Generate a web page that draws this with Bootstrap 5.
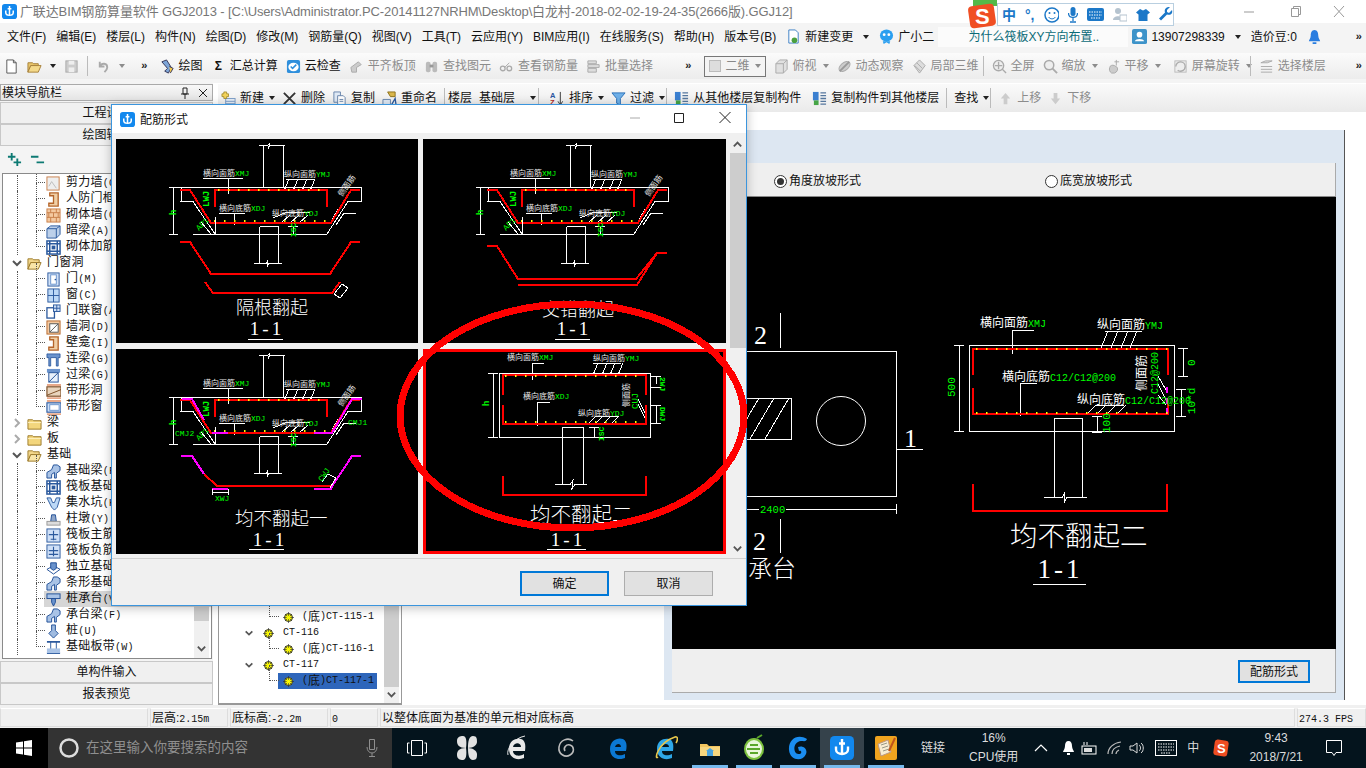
<!DOCTYPE html>
<html lang="zh-CN">
<head>
<meta charset="UTF-8">
<title>广联达BIM钢筋算量软件 GGJ2013</title>
<link rel="stylesheet" href="https://cdn.jsdelivr.net/npm/bootstrap@5.3.3/dist/css/bootstrap.min.css">
<style>
html, body { margin: 0; background: #fff; }
body { width: 1366px; height: 768px; overflow: hidden; position: relative; font: 12px/16px "Liberation Sans", "Noto Sans CJK SC", sans-serif; color: #111; }
.ic { width: 15px; height: 15px; flex: none; }
.ic-sm { width: 11px; height: 11px; flex: none; }
.title-bar { height: 23px; color: #777; font-size: 13px; padding-left: 2px; }
.title-txt { margin-left: 3px; letter-spacing: -.13px; white-space: nowrap; }
.win-ctl { position: absolute; top: 0; height: 23px; width: 46px; text-align: center; }
.menu-bar { height: 27px; background: #f4f4f4; padding-left: 7px; gap: 10px; white-space: nowrap; }
.hint-box { width: 190px; height: 20px; background: #fbfbfb; color: #0b6b78; padding-left: 30px; line-height: 20px; margin-left: -6px; margin-right: -6px; }
.chev { color: #222; font: bold 11px/10px "Liberation Mono", monospace; }
.band { height: 33px; background: #f4f4f4; padding-top: 3px; }
.seg { height: 26px; background: linear-gradient(#fbfbfb, #ececec); gap: 8px; white-space: nowrap; }
.tbi { display: inline-flex; align-items: center; gap: 4px; }
.off { color: #8c8c8c; }
.tri { width: 0; height: 0; border: 3px solid transparent; border-top: 4px solid #222; border-bottom: 0; flex: none; }
.tri.lt { border-top-color: #8c8c8c; }
.seg .tri, .band-2 .tri { margin-left: -2px; }
.vsep { width: 1px; height: 20px; background: #bbb; flex: none; }
.vs-l4 { margin-left: -4px; }
.vs-r4 { margin-right: -4px; }
.seg .tri-r6, .band-2 .tri-r6 { margin-right: -6px; }
.band-2 .tri-r5 { margin-right: -5px; }
.dim-box { width: 62px; height: 21px; border: 1px solid #777; background: #f4f4f4; padding: 0 4px; gap: 5px; color: #888; }
.sq { width: 12px; height: 12px; background: #ddd; border: 1px solid #bbb; }
.body-row { height: 622px; }
.left-pane { width: 213px; background: #f4f4f4; }
.pane-head { height: 17px; margin: 1px 0 1px; border: 1px solid #aaa; background: linear-gradient(#f8f8f8, #e4e4e4); padding-left: 1px; }
.tab-btn { height: 22px; border: 1px solid #c8c8c8; background: #f0f0f0; text-align: center; line-height: 21px; font-size: 12px; flex: none; }
.tree-tools { height: 27px; background: #f4f4f4; padding-left: 7px; gap: 8px; flex: none; }
.tree-box { height: 486px; margin: 0 1px 2px 2px; border: 1px solid #8a8a8a; background: #fff; overflow: hidden; position: relative; padding-top: 1px; flex: none; }
.node { height: 16px; position: relative; white-space: nowrap; display: flex; align-items: center; }
.node.kid { padding-left: 43px; }
.node.dir { padding-left: 8px; }
.node .ic { margin-right: 4px; }
.node .arw { width: 12px; height: 12px; margin-right: 4px; flex: none; }
.node::before { content: ""; position: absolute; left: 14px; top: 0; bottom: 0; border-left: 1px dotted #555; }
.node.dir::before { display: none; }
.node.kid::after { content: ""; position: absolute; left: 33px; top: -8px; height: 16px; width: 9px; border-left: 1px dotted #555; border-bottom: 1px dotted #555; }
.node.sel { background: linear-gradient(#d6d6d6, #d6d6d6) 41px 0 no-repeat; }
.lab { padding: 0 1px; letter-spacing: .02em; }
.lat { font: 10px/16px "Liberation Mono", monospace; }
.vbar { position: absolute; right: 2px; top: 0; bottom: 0; width: 15px; background: #f0f0f0; }
.vbar-thumb { position: absolute; left: 0; right: 0; background: #cdcdcd; }
.vbar-arw { position: absolute; left: 2px; width: 11px; height: 11px; }
.mid-pane { width: 184px; margin-left: 5px; border: 1px solid #999; border-width: 0 1px 2px 1px; position: relative; padding-bottom: 14px; background: #fff; }
.ct-row { height: 16px; position: relative; white-space: nowrap; display: flex; align-items: center; }
.ct-head { padding-left: 25px; }
.ct-leaf { padding-left: 64px; }
.ct-head .arw { width: 10px; height: 10px; flex: none; }
.ct-head .ic-sm { margin: 0 9px 0 9px; }
.ct-leaf .ic-sm { margin-right: 8px; }
.ct-leaf::before { content: ""; position: absolute; left: 50px; top: -8px; height: 16px; width: 10px; border-left: 1px dotted #555; border-bottom: 1px dotted #555; }
.ct-hit { background: #2e66bb; padding: 0 5px; margin-left: -5px; width: 99px; height: 16px; display: flex; align-items: center; }
.main-pane { background: #fff; position: relative; }
.band-2 { height: 28px; background: linear-gradient(#fafafa, #eaeaea); gap: 7px; padding-left: 3px; white-space: nowrap; margin-left: 5px; margin-top: 1px; flex: none; }
.stat-bar { height: 23px; background: #f0f0f0; padding-top: 3px; }
.stat-cell { height: 19px; border: 1px solid #ddd; border-top-color: #fff; margin-right: 2px; padding-left: 1px; line-height: 18px; white-space: nowrap; overflow: hidden; flex: none; }
.sc-a { width: 148px; } .sc-b { width: 78px; } .sc-c { width: 98px; } .sc-d { width: 48px; } .sc-e { width: 915px; } .sc-f { width: 69px; margin-right: 0; }
.task-bar { height: 40px; background: #04141d; color: #ddd; }
.start-btn { width: 48px; background: #000; flex: none; }
.search-box { width: 344px; background: #333; color: #8f8f8f; padding: 0 10px; gap: 6px; font-size: 13.5px; flex: none; }
.tk { width: 44px; height: 40px; position: relative; flex: none; }
.tk-w { width: 50px; }
.tk-e { width: 52px; }
.tk-on { background: #35424b; }
.tk.run::after { content: ""; position: absolute; left: 4px; right: 4px; bottom: 0; height: 3px; background: #76b9ed; }
.tray-lbl { font-size: 12px; color: #ddd; text-align: center; white-space: nowrap; line-height: 19px; }
.lnk-lbl { margin-left: 13px; }
.tray-row { gap: 6px; }
.wnd-bg { position: absolute; left: 664px; top: 130px; width: 681px; height: 570px; background: #dde7f2; border-right: 1px solid #555; }
.radio-strip { position: absolute; left: 8px; top: 33px; width: 664px; height: 34px; background: #efefef; border-bottom: 1px solid #888; border-right: 1px solid #aaa; }
.rad { position: absolute; top: 10px; display: flex; align-items: center; gap: 2px; }
.rad-a { left: 102px; }
.rad-b { left: 373px; }
.rad-o { width: 13px; height: 13px; border: 1px solid #333; border-radius: 50%; background: #fff; position: relative; }
.rad-o.on::after { content: ""; position: absolute; inset: 2px; border-radius: 50%; background: #333; }
.cad-wrap { position: absolute; left: 8px; top: 67px; width: 664px; height: 452px; background: #000; }
.cad-wrap svg, .dg-cell svg { display: block; }
.bot-strip { position: absolute; left: 8px; top: 519px; width: 664px; height: 44px; background: #efefef; border-bottom: 1px solid #aaa; border-right: 1px solid #aaa; }
.win-btn { border-radius: 0; font: 12px/18px "Liberation Sans", "Noto Sans CJK SC", sans-serif; padding: 0; background: #e1e1e1; color: #111; }
.btn-form { position: absolute; left: 566px; top: 11px; width: 72px; height: 23px; border: 2px solid #0078d7; }
.dlg { position: absolute; left: 111px; top: 104px; width: 636px; height: 502px; background: #f0f0f0; border: 1px solid #3b95dd; box-shadow: 0 2px 10px rgba(0,0,0,.25); }
.dlg-head { height: 28px; background: #fff; padding: 1px 0 0 8px; gap: 5px; font-size: 12px; position: relative; }
.dlg-ctl { position: absolute; top: 3px; }
.dlg-grid { position: absolute; left: 4px; top: 34px; width: 611px; display: grid; grid-template-columns: 302px 303px; grid-template-rows: 204px 205px; gap: 6px 5px; }
.dg-cell { background: #000; overflow: hidden; }
.dg-cell.pick { outline: 3px solid #f00; outline-offset: -3px; }
.dlg-scroll { position: absolute; left: 618px; top: 30px; width: 16px; height: 422px; background: #f0f0f0; }
.dlg-foot { position: absolute; left: 0; right: 0; bottom: 0; height: 47px; border-top: 1px solid #d0d0d0; }
.btn-ok { position: absolute; left: 408px; top: 12px; width: 89px; height: 25px; border: 2px solid #0078d7; }
.btn-no { position: absolute; left: 512px; top: 12px; width: 89px; height: 25px; border: 1px solid #adadad; }
.ring-mark { position: absolute; left: 0; top: 0; width: 1366px; height: 768px; pointer-events: none; }
.ime-bar { position: absolute; left: 997px; top: 3px; width: 177px; height: 23px; background: #fff; border: 1px solid #b9cfe0; gap: 9px; padding-left: 4px; color: #1c78c8; font-weight: 700; font-size: 14px; }
.ime-logo { position: absolute; left: 966px; top: 0; width: 32px; height: 30px; }
.cad-t { font-family: "Liberation Sans", "Noto Sans CJK SC", sans-serif; fill: #fff; font-weight: 300; }
.cad-n { font-family: "Liberation Serif", serif; fill: #fff; }
.num-1 { font-size: 19px; letter-spacing: 3px; text-anchor: middle; }
.num-2 { font-size: 27px; letter-spacing: 3px; text-anchor: middle; }
.lb { font-size: 8px; fill: #e8e8e8; font-family: "Noto Sans CJK SC", sans-serif; }
.lb-big { font-size: 12px; fill: #fff; font-family: "Noto Sans CJK SC", sans-serif; }
.gr { fill: #0f0; font-family: "Liberation Mono", monospace; }
.wl { stroke: #fff; stroke-width: 1; fill: none; shape-rendering: crispEdges; }
.rd { stroke: #f00; stroke-width: 2; fill: none; shape-rendering: crispEdges; }
.mg { stroke: #f0f; stroke-width: 2; fill: none; shape-rendering: crispEdges; }
.yd { stroke: #ff0; stroke-width: 2; fill: none; stroke-dasharray: 1.5 8.5; }
</style>
</head>
<body>

<svg width="0" height="0" class="position-absolute">
  <defs>
    <symbol id="i-chv" viewBox="0 0 12 12"><path d="M2 4l4 4 4-4" fill="none" stroke="#555" stroke-width="2"/></symbol>
    <symbol id="i-chu" viewBox="0 0 12 12"><path d="M2 8l4-4 4 4" fill="none" stroke="#555" stroke-width="2"/></symbol>
    <symbol id="i-chr" viewBox="0 0 12 12"><path d="M4 2l4 4-4 4" fill="none" stroke="#aaa" stroke-width="2"/></symbol>
    <symbol id="i-gld" viewBox="0 0 16 16"><rect width="16" height="16" rx="3" fill="#1288ee"/><path d="M8 2v10M4 7v2c0 2 2 3 4 3s4-1 4-3V7M6 5h4" stroke="#fff" stroke-width="1.6" fill="none"/></symbol>
    <symbol id="i-doc" viewBox="0 0 16 16"><path d="M3 1h7l3 3v11H3z" fill="#fff" stroke="#555"/><path d="M10 1v3h3" fill="none" stroke="#555"/></symbol>
    <symbol id="i-open" viewBox="0 0 16 16"><path d="M1 4h5l1 1h5v2H4L1 14z" fill="#e8c56a" stroke="#a6803a"/><path d="M4 7h11l-3 7H1z" fill="#f4d98a" stroke="#a6803a"/></symbol>
    <symbol id="i-save" viewBox="0 0 16 16"><rect x="2" y="2" width="12" height="12" fill="#ccc" stroke="#aaa"/><rect x="5" y="2" width="6" height="4" fill="#eee"/><rect x="5" y="9" width="6" height="5" fill="#eee"/></symbol>
    <symbol id="i-undo" viewBox="0 0 16 16"><path d="M4 3v5h5M4 8c2-4 8-4 8 1 0 2-1 3-3 5" fill="none" stroke="#aaa" stroke-width="2"/></symbol>
    <symbol id="i-draw" viewBox="0 0 16 16"><path d="M2 3l5-2 5 8-3 6-4-2 3-3z" fill="#7ea6d8" stroke="#335"/><path d="M10 8l4 2-3 5" fill="#f2c94c" stroke="#335"/></symbol>
    <symbol id="i-check" viewBox="0 0 16 16"><rect x="1" y="1" width="14" height="14" rx="2" fill="#2f8fdc"/><ellipse cx="8" cy="8.5" rx="5.5" ry="4.5" fill="#fff"/><path d="M5 8l2 2 4-4" stroke="#2f8fdc" stroke-width="1.6" fill="none"/></symbol>
    <symbol id="i-g1" viewBox="0 0 16 16"><path d="M2 9l8-6 3 3-5 3v5H3z" fill="#ccc" stroke="#aaa"/></symbol>
    <symbol id="i-g2" viewBox="0 0 16 16"><rect x="2" y="3" width="5" height="11" rx="2" fill="#bbb"/><rect x="9" y="3" width="5" height="11" rx="2" fill="#bbb"/><rect x="6" y="6" width="4" height="3" fill="#999"/></symbol>
    <symbol id="i-g3" viewBox="0 0 16 16"><circle cx="4" cy="10" r="2.5" fill="none" stroke="#aaa" stroke-width="1.4"/><circle cx="11" cy="10" r="2.5" fill="none" stroke="#aaa" stroke-width="1.4"/><path d="M6 9l5-5" stroke="#aaa"/></symbol>
    <symbol id="i-g4" viewBox="0 0 16 16"><path d="M2 2h9v3H2zM2 6h12v3H2zM2 10h9v4H2z" fill="#ddd" stroke="#aaa"/></symbol>
    <symbol id="i-cube" viewBox="0 0 16 16"><path d="M2 5l4-4h8v10l-4 4H2z" fill="#e0e0e0" stroke="#aaa"/><path d="M2 5h8v10M10 5l4-4" fill="none" stroke="#aaa"/></symbol>
    <symbol id="i-orb" viewBox="0 0 16 16"><ellipse cx="8" cy="8" rx="7" ry="4" transform="rotate(-40 8 8)" fill="#ccc" stroke="#aaa"/><path d="M3 13L13 3" stroke="#999" stroke-width="2"/></symbol>
    <symbol id="i-cu3" viewBox="0 0 16 16"><path d="M8 1l6 6-6 8-6-8z" fill="#ddd" stroke="#aaa"/><path d="M5 4l6 6M3 7l6 6" stroke="#aaa"/></symbol>
    <symbol id="i-full" viewBox="0 0 16 16"><circle cx="7" cy="7" r="5.5" fill="#eee" stroke="#aaa" stroke-width="1.4"/><path d="M7 3v8M3 7h8M11 11l4 4" stroke="#aaa" stroke-width="1.4"/></symbol>
    <symbol id="i-zoom" viewBox="0 0 16 16"><circle cx="6.5" cy="6.5" r="5" fill="#eee" stroke="#aaa" stroke-width="1.6"/><path d="M10 10l5 5" stroke="#aaa" stroke-width="2"/></symbol>
    <symbol id="i-pan" viewBox="0 0 16 16"><path d="M4 9c0-2 3-3 5-2l3 2c1 2 0 5-3 6H6C4 14 3 11 4 9zM11 1v6M9 3h5" fill="#ccc" stroke="#aaa"/></symbol>
    <symbol id="i-rot" viewBox="0 0 16 16"><rect x="2" y="2" width="12" height="12" fill="#eee" stroke="#bbb"/><path d="M3 8a5 5 0 0 1 10 0 5 5 0 0 1-8 4" fill="none" stroke="#aaa" stroke-width="1.4"/></symbol>
    <symbol id="i-layers" viewBox="0 0 16 16"><path d="M2 4l5-2h7L9 4zM2 8h12M2 11h12M2 14h12" fill="#ddd" stroke="#aaa"/></symbol>
    <symbol id="i-new" viewBox="0 0 16 16"><rect x="5" y="8" width="10" height="8" fill="#e6eef8" stroke="#7a9cc6"/><path d="M5 11h10M5 13.500h10" stroke="#7a9cc6"/><path d="M3 1h3v2h2v3H6v2H3V6H1V3h2z" fill="#f3d35a" stroke="#9a8120" stroke-width=".8"/></symbol>
    <symbol id="i-del" viewBox="0 0 16 16"><path d="M2 2l12 12M14 2L2 14" stroke="#333" stroke-width="2"/></symbol>
    <symbol id="i-copy" viewBox="0 0 16 16"><path d="M2 1h7v11H2z" fill="#dfe9f5" stroke="#6684ab"/><path d="M6 5h6l2 2v8H6z" fill="#fff" stroke="#6684ab"/><path d="M8 9h4M8 11h4" stroke="#6684ab"/></symbol>
    <symbol id="i-ren" viewBox="0 0 16 16"><path d="M6 1h8v5H9z" fill="#d9b64b" stroke="#8c6f1a"/><path d="M1 9h8v6H1z" fill="#dfe9f5" stroke="#6684ab"/><path d="M10 15l4-7 1 7" fill="none" stroke="#2c5a9e" stroke-width="1.4"/></symbol>
    <symbol id="i-sort" viewBox="0 0 16 16"><text x="0" y="7" font-size="8" font-weight="700" fill="#2b55a0" font-family="Liberation Sans">A</text><text x="0" y="15" font-size="8" font-weight="700" fill="#b02a2a" font-family="Liberation Sans">Z</text><path d="M11 1v13M8.500 11l2.500 4 2.500-4" stroke="#333" fill="none"/></symbol>
    <symbol id="i-flt" viewBox="0 0 16 16"><path d="M1 2h14l-5 6v7l-4-2V8z" fill="#6fb0e8" stroke="#2a6fb8"/></symbol>
    <symbol id="i-cp1" viewBox="0 0 16 16"><rect x="1" y="1" width="6" height="9" fill="#3a7fd0"/><rect x="2" y="10" width="5" height="5" fill="#46a546"/><path d="M9 2h6M9 5h6M9 8h6M9 11h6M9 14h6" stroke="#56779e" stroke-width="1.4"/></symbol>
    <symbol id="i-up" viewBox="0 0 16 16"><path d="M8 2l5 6h-3v6H6V8H3z" fill="#ccc"/></symbol>
    <symbol id="i-down" viewBox="0 0 16 16"><path d="M8 14l5-6h-3V2H6v6H3z" fill="#ccc"/></symbol>
    <symbol id="i-chg" viewBox="0 0 16 16"><path d="M3 1h7l3 3v11H3z" fill="#fff" stroke="#3b7fc4"/><circle cx="9" cy="12" r="3" fill="#4aa03f"/></symbol>
    <symbol id="i-gxe" viewBox="0 0 16 16"><ellipse cx="8" cy="7" rx="7" ry="6.500" fill="#2a9ff0"/><circle cx="5.500" cy="6" r="1.500" fill="#fff"/><circle cx="10.500" cy="6" r="1.500" fill="#fff"/><path d="M4 13l1 3 3-2 3 2 1-3z" fill="#2a9ff0"/></symbol>
    <symbol id="i-user" viewBox="0 0 16 16"><rect width="16" height="16" rx="2" fill="#3d93c9"/><circle cx="8" cy="6" r="3" fill="#fff"/><path d="M3 13c1-3 9-3 10 0z" fill="#fff"/></symbol>
    <symbol id="i-bell" viewBox="0 0 16 16"><path d="M8 1c3 0 4 3 4 6 0 3 2 5 2 6H2c0-1 2-3 2-6 0-3 1-6 4-6zM6 14h4v2H6z" fill="#2a7de0"/></symbol>
    <symbol id="i-plus2" viewBox="0 0 16 16"><path d="M5 1v8M1 5h8M11 7v8M7 11h8" stroke="#0d7a73" stroke-width="2"/></symbol>
    <symbol id="i-minus2" viewBox="0 0 16 16"><path d="M1 5h8M7 11h8" stroke="#0d7a73" stroke-width="2"/></symbol>
    <symbol id="t-wall" viewBox="0 0 16 16"><rect x="1" y="1" width="13" height="14" fill="#eee" stroke="#c87f4a"/><path d="M3 11l3-5 5 7" stroke="#bbb" fill="none"/></symbol>
    <symbol id="t-frame" viewBox="0 0 16 16"><path d="M4 1h9v14H3v-3h5V4H4z" fill="#f0cfa6" stroke="#b5652a" stroke-width="1.4"/></symbol>
    <symbol id="t-brick" viewBox="0 0 16 16"><rect x="1" y="1" width="14" height="14" fill="#f4c9a0" stroke="#c87f4a"/><path d="M1 5h14M1 10h14M5 1v4M11 1v4M8 5v5M3 5v5M13 5v5M5 10v5M11 10v5" stroke="#c87f4a"/></symbol>
    <symbol id="t-beam" viewBox="0 0 16 16"><path d="M1 5l4-3h10v9l-4 4H1z" fill="#bcd0ea" stroke="#2c5a9e"/><path d="M1 5h10v10M11 5l4-3" fill="none" stroke="#2c5a9e"/></symbol>
    <symbol id="t-door" viewBox="0 0 16 16"><rect x="2" y="1" width="12" height="14" fill="#cfe0f7" stroke="#2c5a9e"/><rect x="5" y="3" width="6" height="10" fill="#fff" stroke="#6a93cd"/><circle cx="10" cy="8" r=".9" fill="#2c5a9e"/></symbol>
    <symbol id="t-win" viewBox="0 0 16 16"><rect x="2" y="1" width="12" height="14" fill="#bcd8f6" stroke="#2c5a9e"/><path d="M8 1v14M2 8h12" stroke="#2c5a9e"/></symbol>
    <symbol id="t-dw" viewBox="0 0 16 16"><rect x="1" y="4" width="8" height="11" fill="#fff" stroke="#2c5a9e" stroke-width="1.4"/><rect x="8" y="1" width="7" height="7" fill="#cfe0f7" stroke="#2c5a9e"/><path d="M11.500 1v7M8 4.500h7" stroke="#2c5a9e"/></symbol>
    <symbol id="t-hole" viewBox="0 0 16 16"><rect x="1" y="1" width="14" height="14" fill="#f4c9a0" stroke="#b5652a"/><rect x="4" y="4" width="9" height="9" fill="#fff" stroke="#555"/><path d="M4 13l9-9" stroke="#555"/></symbol>
    <symbol id="t-lian" viewBox="0 0 16 16"><path d="M1 2h14v4h-2v9h-2V6H5v9H3V6H1z" fill="#6a93cd" stroke="#1f4e96" stroke-width=".8"/></symbol>
    <symbol id="t-guo" viewBox="0 0 16 16"><path d="M1 1h14v4H1z" fill="#6a93cd"/><rect x="3" y="5" width="10" height="10" fill="#e7f0fb" stroke="#1f4e96"/><path d="M3 15L13 5" stroke="#1f4e96"/></symbol>
    <symbol id="t-band" viewBox="0 0 16 16"><rect x="1" y="3" width="15" height="10" fill="#e8d4bd" stroke="#7a4a20" stroke-width="1.2"/><path d="M1 12l15-6" stroke="#7a4a20"/><path d="M1 1h15M1 15h15" stroke="#e8a98a" stroke-width="2"/></symbol>
    <symbol id="t-bwin" viewBox="0 0 16 16"><rect x="1" y="3" width="15" height="10" fill="#cfe0f7" stroke="#2c5a9e" stroke-width="1.2"/><rect x="4" y="5" width="10" height="6" fill="#fff" stroke="#6a93cd"/><path d="M1 1h15M1 15h15" stroke="#e8a98a" stroke-width="2"/></symbol>
    <symbol id="t-rf" viewBox="0 0 16 16"><rect x="1" y="1" width="14" height="14" fill="#fff" stroke="#2c5a9e" stroke-width="1.6"/><path d="M4 1v14M12 1v14M1 4h14M1 12h14" stroke="#2c5a9e" stroke-width="1.6"/><rect x="6" y="6" width="4" height="4" fill="#2c5a9e"/></symbol>
    <symbol id="t-pit" viewBox="0 0 16 16"><path d="M1 2h4l2 5h2l2-5h4l-3 10-3 3-3-3z" fill="#bcd8f6" stroke="#2c5a9e"/></symbol>
    <symbol id="t-pier" viewBox="0 0 16 16"><path d="M6 3h4l1 7H5z" fill="#8fa6c9" stroke="#1f4e96"/><rect x="1" y="10" width="14" height="4" fill="#ddd" stroke="#999"/></symbol>
    <symbol id="t-main" viewBox="0 0 16 16"><rect x="1" y="1" width="14" height="14" fill="#cfe0f7" stroke="#2c5a9e"/><path d="M8 3v10M3 7h10M5 12h6" stroke="#2c5a9e" stroke-width="1.2"/></symbol>
    <symbol id="t-neg" viewBox="0 0 16 16"><rect x="1" y="1" width="14" height="14" fill="#cfe0f7" stroke="#2c5a9e"/><path d="M8 3v10M3 7h10M3 11h10" stroke="#2c5a9e" stroke-width="1.2"/></symbol>
    <symbol id="t-iso" viewBox="0 0 16 16"><path d="M1 10l7-4 7 4-7 5z" fill="#fff" stroke="#1f4e96"/><path d="M5 3h6v6l-3 2-3-2z" fill="#6a93cd" stroke="#1f4e96"/></symbol>
    <symbol id="t-str" viewBox="0 0 16 16"><path d="M1 15V9l5-3 2-5h4l3 2v4l-4 3v5H9v-6L6 11v4z" fill="#a9c3e6" stroke="#1f4e96"/></symbol>
    <symbol id="t-cap" viewBox="0 0 16 16"><rect x="1" y="2" width="14" height="5" fill="#a9c3e6" stroke="#1f4e96"/><path d="M6 7h4v4l-2 4-2-4z" fill="#6a93cd" stroke="#1f4e96"/></symbol>
    <symbol id="t-pile" viewBox="0 0 16 16"><path d="M6 1h4v6l3 3-3 3-2 2-2-2-3-3 3-3z" fill="#9fbbe0" stroke="#1f4e96"/></symbol>
    <symbol id="t-strip" viewBox="0 0 16 16"><path d="M1 2h14M1 14h14" stroke="#2c5a9e" stroke-width="2"/><path d="M5 2v12M11 2v12" stroke="#2c5a9e"/><rect x="1" y="9" width="14" height="5" fill="#a9c3e6"/></symbol>
    <symbol id="t-shut" viewBox="0 0 16 16"><path d="M1 4h5l1 1h8v9H1z" fill="#f3d67d" stroke="#9c7a2a"/><path d="M1 7h14" stroke="#fff2c0"/></symbol>
    <symbol id="t-open" viewBox="0 0 16 16"><path d="M1 3h5l1 1h6v3H4L1 14z" fill="#f2d68a" stroke="#9c7a2a"/><path d="M4 7h11l-3 7H1z" fill="#f9e5a8" stroke="#9c7a2a"/></symbol>
    <symbol id="t-ct" viewBox="0 0 11 11"><circle cx="5.500" cy="5.500" r="4" fill="#ff0" stroke="#333"/><path d="M5.500 0v11M0 5.500h11M2 2l7 7M9 2l-7 7" stroke="#333" stroke-width=".7"/><circle cx="5.500" cy="5.500" r="1.800" fill="#ff0"/></symbol>

    <symbol id="dg-base" viewBox="0 0 302 204" width="302" height="204">
      <path class="wl" d="M142.500 6.500h9l2-2-1 5 1-3h15M147.500 6.500v41.500M167.500 6.500v41.500M62 48.500h184M57.500 48v47M53 48.500h9M53 95.500h9M77 95.500h134M64 62.500h13L99 95M246 62.500h-14L211 95M143.500 87.500h19M143.500 87.500v37M162.500 87.500v37M138 124.500h12l2-3-1 6 2-3h13M65 48.500v14M245.500 48v14M177 87.500v8M172 87.500h10M172 95.500h10"/>
      <path class="wl" d="M87 39.500h40M112.500 39.500v15M170 40.500h29M173 40l-5 12M182 40l-5 12M191 40l-5 12M199 40l-5 12M103 74.500h26M118.500 74v12M157 79l14-6h23M165 84l9-8M174 84l9-8M183 84l9-8M228 74.500h12M228 74l-8 12M222 70l-7 13"/>
      <path class="rd" d="M64 51h10l21 33h120l20-33h9"/>
      <path class="rd" stroke-width="3" d="M99 68V51h112v17"/>
      <path class="yd" d="M102 51h108M98 82h116"/>
      <text class="lb" x="87" y="37">横向面筋<tspan class="gr">XMJ</tspan></text>
      <text class="lb" x="168" y="38">纵向面筋<tspan class="gr">YMJ</tspan></text>
      <text class="lb" x="103" y="72">横向底筋<tspan class="gr">XDJ</tspan></text>
      <text class="lb" x="156" y="77">纵向底筋<tspan class="gr">YDJ</tspan></text>
      <text class="lb" transform="rotate(-55 226 58)" x="226" y="58">侧面筋</text>
      <text class="gr" font-size="9" font-weight="700" transform="rotate(-90 93 68)" x="93" y="68">LWJ</text>
      <text class="gr" font-size="9" font-weight="700" transform="rotate(-90 60 76)" x="60" y="76">h</text>
      <text class="gr" font-size="8" font-weight="700" transform="rotate(-90 180 98)" x="180" y="98">ISC</text>
      <text class="gr" font-size="8" transform="rotate(-45 83 92)" x="83" y="92">AP1</text>
      <path class="wl" d="M85 83l10 12M99 78v17"/>
    </symbol>
  </defs>
</svg>

<!-- title -->
<div class="title-bar d-flex align-items-center position-relative">
  <svg class="ic"><use href="#i-gld"/></svg>
  <span class="title-txt">广联达BIM钢筋算量软件 GGJ2013 - [C:\Users\Administrator.PC-20141127NRHM\Desktop\白龙村-2018-02-02-19-24-35(2666版).GGJ12]</span>
  <span class="win-ctl" style="left:1226px"><svg width="12" height="23"><path d="M1 12h10" stroke="#999"/></svg></span>
  <span class="win-ctl" style="left:1273px"><svg width="12" height="23"><path d="M1.500 8.500h7v8h-7zM3.500 8V6.500h7v8H9" fill="none" stroke="#999"/></svg></span>
  <span class="win-ctl" style="left:1316px"><svg width="12" height="23"><path d="M1 6l10 11M11 6L1 17" stroke="#999"/></svg></span>
</div>

<!-- menu -->
<div class="menu-bar d-flex align-items-center">
  <span>文件(F)</span><span>编辑(E)</span><span>楼层(L)</span><span>构件(N)</span><span>绘图(D)</span><span>修改(M)</span><span>钢筋量(Q)</span><span>视图(V)</span><span>工具(T)</span><span>云应用(Y)</span><span>BIM应用(I)</span><span>在线服务(S)</span><span>帮助(H)</span><span>版本号(B)</span>
  <span class="tbi"><svg class="ic"><use href="#i-chg"/></svg>新建变更</span><span class="tri"></span>
  <span class="tbi"><svg class="ic"><use href="#i-gxe"/></svg>广小二</span>
  <span class="hint-box">为什么筏板XY方向布置..</span>
  <span class="tbi"><svg class="ic"><use href="#i-user"/></svg>13907298339</span><span class="tri"></span>
  <span>造价豆:0</span><svg class="ic"><use href="#i-bell"/></svg>
  <span class="chev ms-auto pe-1">»</span>
</div>

<!-- toolbar 1 -->
<div class="band">
  <div class="seg d-flex align-items-center ps-1">
    <svg class="ic"><use href="#i-doc"/></svg>
    <span class="tbi"><svg class="ic"><use href="#i-open"/></svg><span class="tri ms-1"></span></span>
    <svg class="ic"><use href="#i-save"/></svg>
    <span class="vsep"></span>
    <span class="tbi"><svg class="ic"><use href="#i-undo"/></svg><span class="tri lt ms-1"></span></span>
    <span class="chev ms-2">»</span>
    <span class="tbi ms-1"><svg class="ic"><use href="#i-draw"/></svg>绘图</span>
    <span class="tbi"><b class="px-1">Σ</b>汇总计算</span>
    <span class="tbi"><svg class="ic"><use href="#i-check"/></svg>云检查</span>
    <span class="tbi off"><svg class="ic"><use href="#i-g1"/></svg>平齐板顶</span>
    <span class="tbi off"><svg class="ic"><use href="#i-g2"/></svg>查找图元</span>
    <span class="tbi off"><svg class="ic"><use href="#i-g3"/></svg>查看钢筋量</span>
    <span class="tbi off"><svg class="ic"><use href="#i-g4"/></svg>批量选择</span>
    <span class="chev ms-4">»</span>
    <span class="dim-box d-flex align-items-center ms-1"><span class="sq"></span>二维<span class="tri lt ms-auto"></span></span>
    <span class="tbi off"><svg class="ic"><use href="#i-cube"/></svg>俯视</span><span class="tri lt"></span>
    <span class="tbi off"><svg class="ic"><use href="#i-orb"/></svg>动态观察</span>
    <span class="tbi off"><svg class="ic"><use href="#i-cu3"/></svg>局部三维</span>
    <span class="vsep vs-l4"></span>
    <span class="tbi off"><svg class="ic"><use href="#i-full"/></svg>全屏</span>
    <span class="tbi off"><svg class="ic"><use href="#i-zoom"/></svg>缩放</span><span class="tri lt"></span>
    <span class="tbi off"><svg class="ic"><use href="#i-pan"/></svg>平移</span><span class="tri lt"></span>
    <span class="tbi off ms-1"><svg class="ic"><use href="#i-rot"/></svg>屏幕旋转</span><span class="tri lt tri-r6"></span>
    <span class="vsep vs-l4"></span>
    <span class="tbi off"><svg class="ic"><use href="#i-layers"/></svg>选择楼层</span>
    <span class="chev ms-auto pe-1">»</span>
  </div>
</div>

<!-- work area -->
<div class="body-row d-flex">
  <div class="left-pane d-flex flex-column">
    <div class="pane-head d-flex align-items-center flex-none">模块导航栏
      <svg class="ms-auto" width="10" height="12"><path d="M3 1h4v6H3zM1 7h8M5 7v5" fill="none" stroke="#222"/></svg>
      <svg class="mx-1 ms-2" width="10" height="10"><path d="M1 1l8 8M9 1L1 9" stroke="#222"/></svg>
    </div>
    <div class="tab-btn">工程设置</div>
    <div class="tab-btn">绘图输入</div>
    <div class="tree-tools d-flex align-items-center"><svg class="ic"><use href="#i-plus2"/></svg><svg class="ic"><use href="#i-minus2"/></svg></div>
    <div class="tree-box">
      <div id="treeRows"></div>
      <div class="vbar"><div class="vbar-thumb" style="top:0;height:447px"></div><svg class="vbar-arw" style="bottom:4px"><use href="#i-chv"/></svg></div>
    </div>
    <div class="tab-btn">单构件输入</div>
    <div class="tab-btn">报表预览</div>
  </div>

  <div class="flex-grow-1 d-flex flex-column">
    <div class="band-2 d-flex align-items-center">
      <span class="tbi"><svg class="ic"><use href="#i-new"/></svg>新建</span><span class="tri"></span>
      <span class="tbi"><svg class="ic"><use href="#i-del"/></svg>删除</span>
      <span class="tbi"><svg class="ic"><use href="#i-copy"/></svg>复制</span>
      <span class="tbi"><svg class="ic"><use href="#i-ren"/></svg>重命名</span>
      <span class="vsep vs-r4"></span><span>楼层</span><span class="tbi">基础层</span><span class="tri ms-2 tri-r5"></span><span class="vsep"></span>
      <span class="tbi ms-1"><svg class="ic"><use href="#i-sort"/></svg>排序</span><span class="tri"></span>
      <span class="tbi"><svg class="ic"><use href="#i-flt"/></svg>过滤</span><span class="tri tri-r6"></span>
      <span class="vsep"></span>
      <span class="tbi"><svg class="ic"><use href="#i-cp1"/></svg>从其他楼层复制构件</span>
      <span class="tbi ms-1"><svg class="ic"><use href="#i-cp1"/></svg>复制构件到其他楼层</span>
      <span class="vsep"></span><span>查找</span><span class="tri tri-r6"></span><span class="vsep"></span>
      <span class="tbi off"><svg class="ic"><use href="#i-up"/></svg>上移</span>
      <span class="tbi off"><svg class="ic"><use href="#i-down"/></svg>下移</span>
    </div>
    <div class="flex-grow-1 d-flex">
      <div class="mid-pane d-flex flex-column justify-content-end">
        <div class="vbar"><div class="vbar-thumb" style="top:0;height:575px"></div><svg class="vbar-arw" style="bottom:3px"><use href="#i-chv"/></svg></div>
        <div class="ct-row ct-leaf"><svg class="ic-sm"><use href="#t-ct"/></svg><span class="lat">(</span>底<span class="lat">)CT-115-1</span></div>
        <div class="ct-row ct-head"><svg class="arw"><use href="#i-chv"/></svg><svg class="ic-sm"><use href="#t-ct"/></svg><span class="lat">CT-116</span></div>
        <div class="ct-row ct-leaf"><svg class="ic-sm"><use href="#t-ct"/></svg><span class="lat">(</span>底<span class="lat">)CT-116-1</span></div>
        <div class="ct-row ct-head"><svg class="arw"><use href="#i-chv"/></svg><svg class="ic-sm"><use href="#t-ct"/></svg><span class="lat">CT-117</span></div>
        <div class="ct-row ct-leaf"><span class="ct-hit"><svg class="ic-sm"><use href="#t-ct"/></svg><span class="lat">(</span>底<span class="lat">)CT-117-1</span></span></div>
      </div>
      <div class="main-pane flex-grow-1"></div>
    </div>
  </div>
</div>

<!-- status -->
<div class="stat-bar d-flex">
  <div class="stat-cell sc-a"></div>
  <div class="stat-cell sc-b">层高:<span class="lat">2.15m</span></div>
  <div class="stat-cell sc-c">底标高:<span class="lat">-2.2m</span></div>
  <div class="stat-cell sc-d"><span class="lat">0</span></div>
  <div class="stat-cell sc-e">以整体底面为基准的单元相对底标高</div>
  <div class="stat-cell sc-f"><span class="lat">274.3 FPS</span></div>
</div>

<!-- taskbar -->
<div class="task-bar d-flex">
  <div class="start-btn d-flex align-items-center justify-content-center">
    <svg width="16" height="16"><path d="M0 2.500l7-1v6H0zM8 1.300L16 0v7.500H8zM0 8.500h7v6l-7-1zM8 8.500h8V16l-8-1.300z" fill="#fff"/></svg>
  </div>
  <div class="search-box d-flex align-items-center">
    <svg width="22" height="22"><circle cx="11" cy="11" r="8.500" fill="none" stroke="#ddd" stroke-width="2.500"/></svg>
    <span>在这里输入你要搜索的内容</span>
    <svg class="ms-auto me-1" width="12" height="20"><path d="M3.500 1.500h5v10h-5zM1 9c0 8 10 8 10 0M6 15v3M3 18.500h6" fill="none" stroke="#8f8f8f"/></svg>
  </div>
  <div class="tk tk-w d-flex align-items-center justify-content-center"><svg width="20" height="18"><path d="M4.500 1.500h11v15h-11zM2.500 4H.5v10h2M17.500 4h2v10h-2" fill="none" stroke="#fff"/></svg></div>
  <div class="tk tk-w d-flex align-items-center justify-content-center"><svg width="22" height="26"><path d="M10 13C3 13 1 10 1 6s3-5 6-5 4 4 3 12zM12 13c0-7 1-12 5-12s4 3 4 6-4 6-9 6zM10 13c-7 0-9 3-9 7s3 5 6 5 4-5 3-12zM12 13c0 7 1 12 5 12s4-3 4-6-4-6-9-6z" fill="#e2e2e2"/></svg></div>
  <div class="tk tk-w d-flex align-items-center justify-content-center"><svg width="22" height="26"><path d="M19 16H7c0 5 7 6 11 3v4c-7 3-15 0-15-9S10 3 15 4c4 1 5 6 4 12zM7 12h8c0-5-7-5-8 0z" fill="#e8e8e8"/><path d="M2 20C0 14 8 3 19 1" fill="none" stroke="#e8e8e8"/></svg></div>
  <div class="tk tk-w d-flex align-items-center justify-content-center"><svg width="20" height="22"><path d="M16 4C11 0 3 3 2 10s6 11 11 8 4-9 0-10-7 3-5 6" fill="none" stroke="#bbb" stroke-width="1.600"/></svg></div>
  <div class="tk tk-e d-flex align-items-center justify-content-center"><svg width="20" height="22"><path d="M18 14H7c0 5 6 5 10 3v4C10 24 2 21 2 12S10 0 15 2c4 2 4 7 3 12zM7 10h6c0-4-5-4-6 0z" fill="#0b78d4"/></svg></div>
  <div class="tk d-flex align-items-center justify-content-center"><svg width="24" height="26"><path d="M19 16H8c0 5 6 5 10 3v4C11 26 3 23 3 14S10 3 15 4c4 1 5 6 4 12zM8 12h7c0-4-6-4-7 0z" fill="#2ea7e8"/><path d="M4 22C0 26 3 8 21 2c3-1 3 3 1 6" fill="none" stroke="#e9c84c" stroke-width="1.600"/></svg></div>
  <div class="tk run d-flex align-items-center justify-content-center"><svg width="22" height="20"><path d="M1 18V6h7l2 2h11v10z" fill="#f3c65f"/><path d="M1 18V9h20v9z" fill="#f8d77f"/><path d="M8 13h6v5H8z" fill="#4aa3df"/><path d="M7 13h8L11 10z" fill="#4aa3df"/></svg></div>
  <div class="tk run d-flex align-items-center justify-content-center"><svg width="24" height="28"><ellipse cx="12" cy="15" rx="10" ry="11" fill="#7cc13e"/><ellipse cx="12" cy="15" rx="8" ry="9" fill="#e9f7da"/><path d="M5 15h13M8 11h8M8 19h8" stroke="#5aa72a" stroke-width="2"/><path d="M15 4l5-3" stroke="#5aa72a" stroke-width="2"/></svg></div>
  <div class="tk run d-flex align-items-center justify-content-center"><svg width="24" height="28"><path d="M21 5c-9-6-19 0-18 11s14 12 17 4c2-5-3-9-8-7l1 4c3-1 3 3 0 3-6 1-7-12 2-13 3 0 5 1 6-2z" fill="#1a8df0"/></svg></div>
  <div class="tk tk-on run d-flex align-items-center justify-content-center"><svg width="24" height="24"><use href="#i-gld"/></svg></div>
  <div class="tk run d-flex align-items-center justify-content-center"><svg width="24" height="26"><rect x="1" y="1" width="22" height="24" rx="2" fill="#f0a41f"/><path d="M4 9l10-4 3 12-10 4z" fill="#f8edd2" stroke="#b98"/><path d="M7 10l6-2M8 13l6-2M9 16l6-2" stroke="#998"/><path d="M15 16l6-13" stroke="#c0541a" stroke-width="2"/></svg></div>
  <div class="tray-lbl align-self-center lnk-lbl">链接</div>
  <div class="tray-lbl align-self-center ms-4">16%<br>CPU使用</div>
  <div class="d-flex align-items-center tray-row ms-3">
    <svg width="14" height="8"><path d="M1 7l6-6 6 6" fill="none" stroke="#fff" stroke-width="1.200"/></svg>
    <svg class="ms-2" width="13" height="16"><path d="M6.500 1C9 1 10 3 10 6c0 3 2 5 2 6H1c0-1 2-3 2-6 0-3 1-5 3.500-5zM5 13h3v2H5z" fill="#fff"/></svg>
    <svg width="16" height="14"><rect x="1" y="5" width="14" height="8" fill="none" stroke="#fff"/><rect x="3" y="7" width="8" height="4" fill="#ddd"/><path d="M3 4V1M6 4V1" stroke="#fff"/></svg>
    <svg class="ms-1" width="16" height="14"><path d="M1 13c0-6 5-11 13-12M5 13c0-4 3-7 8-8M9 13c0-2 1-3 3-4" fill="none" stroke="#bbb" stroke-width="1.200"/></svg>
    <svg width="16" height="14"><path d="M1 5h3l4-3v10L4 9H1zM10 4c2 1 2 5 0 6M12 2c3 2 3 8 0 10" fill="none" stroke="#ddd"/></svg>
    <svg class="ms-1" width="22" height="16"><rect x=".5" y=".5" width="21" height="15" fill="none" stroke="#fff"/><path d="M3 4h16M3 7h16M3 10h16M6 13h10" stroke="#fff" stroke-dasharray="1.500 1"/></svg>
    <span class="tray-lbl ms-1">中</span>
    <svg class="ms-2" width="16" height="18"><rect x="1" y="1" width="14" height="16" rx="3" transform="rotate(8 8 9)" fill="#ef4d22"/><text x="4" y="14" font-size="13" font-weight="700" fill="#fff" font-family="Liberation Sans">S</text></svg>
  </div>
  <div class="tray-lbl align-self-center ms-3 ps-1">9:43<br>2018/7/21</div>
  <div class="d-flex align-items-center ms-auto pe-4"><svg width="16" height="17"><path d="M.5.500h15v12H10l-2 3-2-3H.5z" fill="none" stroke="#fff"/></svg></div>
</div>

<!-- underlying settings window -->
<div class="wnd-bg">
  <div class="radio-strip">
    <span class="rad rad-a"><span class="rad-o on"></span>角度放坡形式</span>
    <span class="rad rad-b"><span class="rad-o"></span>底宽放坡形式</span>
  </div>
  <div class="cad-wrap">
    <svg width="664" height="452" viewBox="672 197 664 452">
      <path class="wl" d="M690 351.500h206.500V496.500H690M780.500 313v35M896 449.500h27M747 509.500h150M896.500 504v10M780.500 519v34"/>
      <path class="wl" d="M700 398.500h91.500v41H700M705 439l24-41M720 439l24-41M735 439l24-41M750 439l24-41M765 439l24-41"/>
      <circle cx="841" cy="421" r="24.500" fill="none" stroke="#fff"/>
      <text class="cad-n" font-size="26" x="754" y="344">2</text>
      <text class="cad-n" font-size="26" x="904" y="447">1</text>
      <text class="cad-n" font-size="26" x="753" y="550">2</text>
      <text class="cad-t" font-size="24" x="748" y="577">承台</text>
      <rect x="759" y="501" width="27" height="16" fill="#000"/>
      <text class="gr" font-size="10.500" x="760" y="513">2400</text>

      <path class="wl" d="M969.500 345.500h205v86h-205zM954 345.500h10M954 431.500h10M959.500 345v86M1012.500 354v-24h21M1105 331h37M1108 331l-7 17M1118 331l-7 17M1128 331l-7 17M1137 331l-7 17M1020.500 416v-33h16M1095 405h29M1087 414l9-9M1097 414l9-9M1107 414l9-9M1117 414l9-9M1054.500 418h28M1054.500 418v79M1082.500 418v79M1044 497.500h18l3-5-1 10 3-5h20M1178 348.500h10M1183.500 348v28M1178 376.500h10M1176 389.500h10M1181.500 389v27M1176 416.500h10M1092 416.500h10M1097.500 416v16M1092 432.500h10M1158 376l8 14M1158 384l8 16M1158 395l8 10"/>
      <path class="rd" d="M973 375v-26h195v26M973 388v26h195v-10"/>
      <path class="mg" d="M1167 387v6M1167 398v6M1167 408v6"/>
      <path class="yd" d="M976 349h192M976 413h192"/>
      <path class="rd" d="M973 484v27h194v-27"/>
      <text class="lb-big" x="980" y="327">横向面筋<tspan class="gr" font-size="10">XMJ</tspan></text>
      <text class="lb-big" x="1097" y="329">纵向面筋<tspan class="gr" font-size="10">YMJ</tspan></text>
      <text class="lb-big" x="1002" y="381">横向底筋<tspan class="gr" font-size="10">C12/C12@200</tspan></text>
      <text class="lb-big" x="1077" y="404">纵向底筋<tspan class="gr" font-size="10">C12/C12@200</tspan></text>
      <text class="lb-big" transform="rotate(-90 1146 391)" x="1146" y="391">侧面筋</text>
      <text class="gr" font-size="10" transform="rotate(-90 1158 394)" x="1158" y="394">C12@200</text>
      <text class="gr" font-size="11" transform="rotate(-90 955 397)" x="955" y="397">500</text>
      <text class="gr" font-size="11" transform="rotate(-90 1195 366)" x="1195" y="366">0</text>
      <text class="gr" font-size="11" transform="rotate(-90 1195 414)" x="1195" y="414">10*d</text>
      <text class="gr" font-size="11" transform="rotate(-90 1110 433)" x="1110" y="433">100</text>
      <text class="cad-t" font-size="27.500" x="1010" y="546">均不翻起二</text>
      <text class="cad-n num-2" x="1060" y="578">1-1</text>
      <path class="wl" d="M1033 584.500h53"/>
    </svg>
  </div>
  <div class="bot-strip"><button type="button" class="btn win-btn btn-form">配筋形式</button></div>
</div>

<!-- dialog -->
<div class="dlg">
  <div class="dlg-head d-flex align-items-center">
    <svg class="ic"><use href="#i-gld"/></svg>配筋形式
    <svg class="dlg-ctl" style="left:517px" width="12" height="20"><path d="M1 10h10" stroke="#aaa"/></svg>
    <svg class="dlg-ctl" style="left:561px" width="12" height="20"><path d="M1.500 5.500h9v9h-9z" fill="none" stroke="#222"/></svg>
    <svg class="dlg-ctl" style="left:607px" width="12" height="20"><path d="M.5 4l11 11M11.500 4L.5 15" stroke="#222"/></svg>
  </div>
  <div class="dlg-grid">
    <div class="dg-cell"><svg width="302" height="204" viewBox="0 0 302 204">
      <use href="#dg-base"/>
      <path class="rd" d="M64 103h10l21 32h119l21-32h9"/>
      <path class="rd" d="M89 143l8 11h119l8-11"/>
      <path class="wl" d="M218 155l8-10 6 4-8 10z"/>
      <text class="cad-t" font-size="18" x="120" y="175">隔根翻起</text>
      <text class="cad-n num-1" x="151" y="196">1-1</text>
      <path class="wl" d="M132 200.500h35"/>
    </svg></div>
    <div class="dg-cell"><svg width="303" height="204" viewBox="0 0 303 204">
      <use href="#dg-base"/>
      <path class="rd" d="M64 107h10l21 33h118l21-26h10"/>
      <path class="rd" d="M95 146h119l20-32"/>
      <text class="cad-t" font-size="18" x="119" y="177">交错翻起</text>
      <text class="cad-n num-1" x="151" y="196">1-1</text>
      <path class="wl" d="M132 200.500h35"/>
    </svg></div>
    <div class="dg-cell"><svg width="302" height="205" viewBox="0 0 302 205">
      <use href="#dg-base"/>
      <path class="mg" d="M66 50h10l12 21M96 84h16M198 84h18l20-34h10"/>
      <path class="rd" d="M88 125l13 12h115"/>
      <path class="mg" d="M65 107h11l12 18M215 139l21-32h9M96 140h16M198 140h18"/>
      <path class="wl" d="M96 143.500h16M96 140v6M112 140v6M206 133l6-8 8 4-6 10"/>
      <text class="gr" font-size="8" x="99" y="152">XWJ</text>
      <text class="gr" font-size="8" x="59" y="87">CMJ2</text>
      <text class="gr" font-size="8" x="232" y="76">CMJ1</text>
      <text class="gr" font-size="8" transform="rotate(-55 206 133)" x="206" y="133">CWJ</text>
      <text class="cad-t" font-size="18.500" x="119" y="176">均不翻起一</text>
      <text class="cad-n num-1" x="154" y="197">1-1</text>
      <path class="wl" d="M133 200.500h35"/>
    </svg></div>
    <div class="dg-cell pick"><svg width="303" height="205" viewBox="0 0 303 205">
      <path class="wl" d="M76.500 24.500h151v64h-151zM65 24.500h10M65 88.500h10M70.500 24v64M139.500 78.500h21M139.500 78v57M160.500 78v57M132 135.500h15l3-4-1 8 3-4h12M109.500 31V14.500h11M170 14.500h28M175 14l-5 12M184 14l-5 12M192 14l-5 12M200 14l-5 12M114.500 77V53.500h12M165 75l8-8h22M172 75l8-8M180 75l8-8M188 75l8-8M228 27h10M233.500 27v8M228 38.500h10M228 56.500h10M233.500 56v18M228 74.500h10M171 78v10M166 78.500h10M166 88.500h10M215 50l7 14M215 55l7 14"/>
      <path class="rd" d="M80 46V26h143v20M80 56v19h143V56"/>
      <path class="rd" d="M80 127v19h143v-19"/>
      <path class="yd" d="M82 27h140M82 73h140"/>
      <text class="lb" x="84" y="11">横向面筋<tspan class="gr">XMJ</tspan></text>
      <text class="lb" x="170" y="12">纵向面筋<tspan class="gr">YMJ</tspan></text>
      <text class="lb" x="100" y="50">横向底筋<tspan class="gr">XDJ</tspan></text>
      <text class="lb" x="155" y="67">纵向底筋<tspan class="gr">YDJ</tspan></text>
      <text class="lb" transform="rotate(-90 206 58)" x="206" y="58">侧面筋</text>
      <text class="gr" font-size="9" transform="rotate(-90 215 60)" x="215" y="60">CUJ</text>
      <text class="gr" font-size="9" font-weight="700" transform="rotate(-90 66 57)" x="66" y="57">h</text>
      <text class="gr" font-size="8" font-weight="700" transform="rotate(90 237 28)" x="237" y="28">2WJ</text>
      <text class="gr" font-size="8" font-weight="700" transform="rotate(90 237 58)" x="237" y="58">DWJ</text>
      <text class="gr" font-size="8" font-weight="700" transform="rotate(-90 181 92)" x="181" y="92">ISC</text>
      <text class="cad-t" font-size="20.500" x="107" y="173">均不翻起二</text>
      <text class="cad-n num-1" x="145" y="197">1-1</text>
      <path class="wl" d="M124 200.500h39"/>
    </svg></div>
  </div>
  <div class="dlg-scroll">
    <svg class="vbar-arw" style="top:4px"><use href="#i-chu"/></svg>
    <div class="vbar-thumb" style="top:18px;height:195px"></div>
    <svg class="vbar-arw" style="bottom:3px"><use href="#i-chv"/></svg>
  </div>
  <div class="dlg-foot">
    <button type="button" class="btn win-btn btn-ok">确定</button>
    <button type="button" class="btn win-btn btn-no">取消</button>
  </div>
</div>

<!-- red hand-drawn ring -->
<svg class="ring-mark"><ellipse cx="572" cy="416" rx="172" ry="112" fill="none" stroke="#f00" stroke-width="7" shape-rendering="crispEdges"/></svg>

<!-- input method bar -->
<div class="ime-bar d-flex align-items-center">
  <span>中</span><span>°,</span>
  <svg width="16" height="16"><circle cx="8" cy="8" r="7" fill="none" stroke="#1c78c8" stroke-width="1.500"/><circle cx="5.500" cy="6" r="1" fill="#1c78c8"/><circle cx="10.500" cy="6" r="1" fill="#1c78c8"/><path d="M4.500 10c2 2.500 5 2.500 7 0" fill="none" stroke="#1c78c8"/></svg>
  <svg width="10" height="17"><rect x="2.500" y="1" width="5" height="9" rx="2.500" fill="#1c78c8"/><path d="M.5 7c0 6 9 6 9 0M5 12v3M2 16h6" fill="none" stroke="#1c78c8" stroke-width="1.300"/></svg>
  <svg width="17" height="13"><rect width="17" height="13" rx="2" fill="#1c78c8"/><path d="M2 4h13M2 7h13M4 10h9" stroke="#fff" stroke-dasharray="1.500 1"/></svg>
  <svg width="14" height="15"><circle cx="5" cy="4" r="3" fill="#b5c3cf"/><path d="M0 13c0-5 10-5 10 0z" fill="#b5c3cf"/><rect x="7" y="8" width="7" height="6" fill="#fff" stroke="#b5c3cf"/></svg>
  <svg width="14" height="14"><path d="M4 1l3 1.500L10 1l4 3.500-2.500 2V13h-9V6.500L0 4.500z" fill="#1c78c8"/></svg>
  <svg width="14" height="15"><path d="M13 3l-3 3-2-1 0-2 3-3C7 0 5 2 6 5.500l-6 6 2 2 6-6c4 1 6-1 5-4.500z" fill="#1c78c8"/></svg>
</div>
<svg class="ime-logo"><rect x="7" y="0" width="24" height="6" fill="#54b948"/><rect x="3" y="5" width="26" height="22" rx="4" transform="rotate(-8 16 16)" fill="#f04e23"/><text x="9" y="24" font-size="22" font-weight="700" fill="#fff" font-family="Liberation Sans">S</text></svg>

<script>
// 左侧构件树
const treeData = [
  ['kid', 't-wall', '剪力墙', '(Q)'], ['kid', 't-frame', '人防门框', '(R)'], ['kid', 't-brick', '砌体墙', '(Q)'],
  ['kid', 't-beam', '暗梁', '(A)'], ['kid', 't-rf', '砌体加筋', '(Y)'],
  ['dir', 't-open', '门窗洞', ''],
  ['kid', 't-door', '门', '(M)'], ['kid', 't-win', '窗', '(C)'], ['kid', 't-dw', '门联窗', '(A)'], ['kid', 't-hole', '墙洞', '(D)'],
  ['kid', 't-frame', '壁龛', '(I)'], ['kid', 't-lian', '连梁', '(G)'], ['kid', 't-guo', '过梁', '(G)'],
  ['kid', 't-band', '带形洞', ''], ['kid', 't-bwin', '带形窗', ''],
  ['shut', 't-shut', '梁', ''], ['shut', 't-shut', '板', ''],
  ['dir', 't-open', '基础', ''],
  ['kid', 't-str', '基础梁', '(F)'], ['kid', 't-rf', '筏板基础', '(M)'], ['kid', 't-pit', '集水坑', '(K)'], ['kid', 't-pier', '柱墩', '(Y)'],
  ['kid', 't-main', '筏板主筋', '(R)'], ['kid', 't-neg', '筏板负筋', '(F)'], ['kid', 't-iso', '独立基础', '(D)'], ['kid', 't-str', '条形基础', '(T)'],
  ['kid sel', 't-cap', '桩承台', '(V)'], ['kid', 't-str', '承台梁', '(F)'], ['kid', 't-pile', '桩', '(U)'], ['kid', 't-strip', '基础板带', '(W)']
];

document.getElementById('treeRows').innerHTML = treeData.map(([kind, icon, name, key]) => {
  const isDir = kind === 'dir' || kind === 'shut';
  const arrow = isDir ? `<svg class="arw"><use href="#${kind === 'shut' ? 'i-chr' : 'i-chv'}"/></svg>` : '';
  return `<div class="node ${isDir ? 'dir' : kind}">${arrow}<svg class="ic"><use href="#${icon}"/></svg><span class="lab">${name}<span class="lat">${key}</span></span></div>`;
}).join('');
</script>
<script src="https://cdn.jsdelivr.net/npm/bootstrap@5.3.3/dist/js/bootstrap.bundle.min.js"></script>
</body>
</html>
